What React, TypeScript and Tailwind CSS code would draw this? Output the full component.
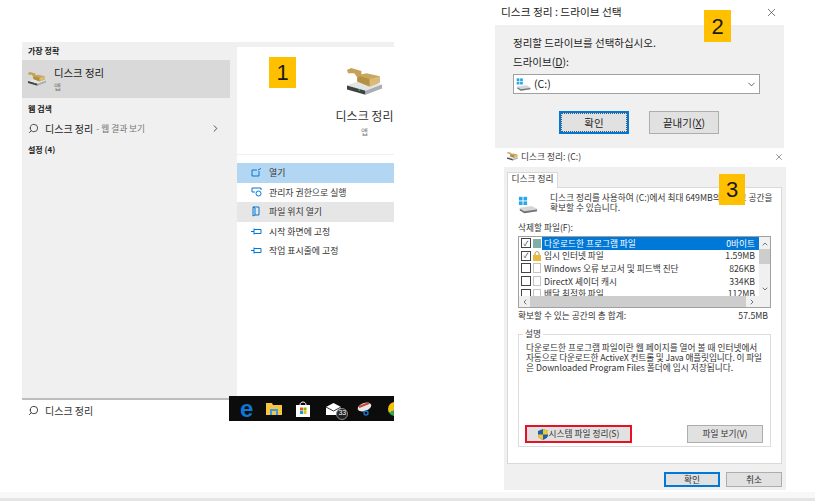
import { ChevronDown, ChevronLeft, ChevronRight, ChevronUp, Search, X } from "lucide-react";
import type { ReactNode } from "react";

const font = "font-['Noto_Sans_CJK_KR','Noto_Sans',sans-serif]";

function CleanupIcon({ size = 28 }: { size?: number }) {
  return (
    <svg width={size} viewBox="0 0 34 26" className="block">
      <path d="M0 17 L16 11 L34 16 L18 22 Z" fill="#e2e4e6" />
      <path d="M0 17 L18 22 L18 26 L0 21 Z" fill="#3e4244" />
      <path d="M18 22 L34 16 L34 20 L18 26 Z" fill="#a9adb1" />
      <circle cx="12" cy="21.5" r="0.9" fill="#35c060" />
      <path d="M10 7 L19 5 L32 8 L32 14 L22 18 L10 13 Z" fill="#c9a75d" />
      <path d="M10 7 L22 11 L22 18 L10 13 Z" fill="#b58f42" />
      <path d="M22 11 L32 8 L32 14 L22 18 Z" fill="#d8bb76" />
      <path d="M0 2 L4 0 L14 3 L14 8 L10 9 L7 5 L1 5 Z" fill="#c5a257" />
    </svg>
  );
}

function DriveIcon({ size = 22 }: { size?: number }) {
  return (
    <svg width={size} height={size} viewBox="0 0 22 20">
      <rect x="1" y="1" width="4" height="4" fill="#28a8ea" />
      <rect x="6" y="1" width="4" height="4" fill="#28a8ea" />
      <rect x="1" y="6" width="4" height="4" fill="#28a8ea" />
      <rect x="6" y="6" width="4" height="4" fill="#28a8ea" />
      <path d="M2 13 L15 11 L21 14 L21 17 L7 19 L2 16 Z" fill="#d4d6d8" />
      <path d="M2 16 L7 19 L21 17 L21 15 L7 17 L2 14 Z" fill="#70757a" />
    </svg>
  );
}

function Badge({ n, className }: { n: number; className: string }) {
  return (
    <div className={`absolute flex items-center justify-center bg-[#ffc000] text-[22px] text-[#1a1a1a] font-['Liberation_Sans',sans-serif] ${className}`}>
      {n}
    </div>
  );
}

function MenuRow({ label, bg, icon }: { label: string; bg?: string; icon: ReactNode }) {
  return (
    <div className={`flex h-[19.5px] items-center text-[8.9px] text-[#333] ${bg ?? ""}`}>
      <span className="ml-[14px] mr-[7px] flex w-[11px] justify-center">{icon}</span>
      {label}
    </div>
  );
}

const pin = (
  <svg width="11" height="9" viewBox="0 0 11 9" fill="none" stroke="#0078d7" strokeWidth="1">
    <path d="M0 4.5H3M3 1.5V7.5M3 2.5H10V6.5H3" />
  </svg>
);

function SearchWindow() {
  return (
    <div className={`absolute left-[22px] top-[42px] h-[379px] w-[372px] ${font}`}>
      <div className="flex h-[356px] bg-[#f0f0f0]">
        <div className="w-[208px] text-[#222]">
          <div className="flex h-[18px] items-center pl-[6px] text-[8px] font-bold">가장 정확</div>
          <div className="flex h-[38px] items-center bg-[#d9d9d9]">
            <span className="ml-[6px] mr-[8px] flex"><CleanupIcon size={18} /></span>
            <div className="flex flex-col">
              <span className="text-[10.4px] leading-[15px]">디스크 정리</span>
              <span className="text-[7.5px] leading-[14px] text-[#777]">앱</span>
            </div>
          </div>
          <div className="flex h-[22px] items-center pl-[6px] text-[8px] font-bold">웹 검색</div>
          <div className="flex h-[17px] items-center pl-[6px]">
            <Search size={11} className="mr-[6px] -scale-x-100 text-[#444]" />
            <span className="text-[10px]">디스크 정리</span>
            <span className="ml-[3px] text-[8.7px] text-[#777]">- 웹 결과 보기</span>
            <ChevronRight size={11} className="ml-auto mr-[9px] text-[#444]" />
          </div>
          <div className="flex h-[26px] items-center pl-[6px] text-[8px] font-bold">설정 (4)</div>
        </div>
        <div className="ml-[7px] mt-[5px] flex w-[157px] flex-col bg-white">
          <div className="flex h-[107px] flex-col items-center whitespace-nowrap">
            <span className="ml-[98px] mt-[21px]"><CleanupIcon size={35} /></span>
            <span className="ml-[98px] mt-[13px] text-[12px] leading-[16px] text-[#333]">디스크 정리</span>
            <span className="ml-[98px] mt-[3px] text-[7.5px] leading-[10px] text-[#777]">앱</span>
          </div>
          <div className="mb-[8px] h-[1px] bg-[#f0f0f0]" />
          <MenuRow
            label="열기"
            bg="bg-[#b3d7f2]"
            icon={
              <svg width="11" height="9" viewBox="0 0 11 9" fill="none" stroke="#0078d7">
                <path d="M8 3V8H1V2H6M7 2L10 .5" />
              </svg>
            }
          />
          <MenuRow
            label="관리자 권한으로 실행"
            icon={
              <svg width="11" height="10" viewBox="0 0 11 10" fill="none" stroke="#0078d7">
                <path d="M1 5V1H10V3M1 5H4" />
                <circle cx="7.5" cy="6.5" r="2.5" />
              </svg>
            }
          />
          <MenuRow
            label="파일 위치 열기"
            bg="bg-[#e6e6e6]"
            icon={
              <svg width="9" height="11" viewBox="0 0 9 11" fill="none" stroke="#0078d7">
                <path d="M1 1H7V9H3M1 1V10L3 9V2L1 1" />
              </svg>
            }
          />
          <MenuRow label="시작 화면에 고정" icon={pin} />
          <MenuRow label="작업 표시줄에 고정" icon={pin} />
        </div>
      </div>
      <div className="flex h-[23px]">
        <div className="flex w-[207px] items-center border-t-2 border-[#bdbdbd] bg-white pl-[6px] text-[#333]">
          <Search size={11} className="mr-[6px] -scale-x-100" />
          <span className="text-[10px]">디스크 정리</span>
        </div>
        <div className="-mt-[2px] flex w-[165px] items-center gap-[13px] overflow-hidden bg-[#0c0c0c] pl-[11px]">
          <span className="w-[16px] text-[24px] font-bold leading-[20px] text-[#0a78d6] font-['Liberation_Sans',sans-serif]">e</span>
          <svg width="16" height="13" viewBox="0 0 16 13" className="shrink-0">
            <path d="M0 1H6L7 3H16V13H0Z" fill="#f5c543" />
            <rect x="4" y="7" width="8" height="6" fill="#3c9ae0" />
            <rect x="6" y="9" width="4" height="4" fill="#f5c543" />
          </svg>
          <svg width="16" height="16" viewBox="0 0 16 16" className="shrink-0">
            <path d="M5 4C5 0 11 0 11 4" fill="none" stroke="#fff" />
            <rect x="1" y="4" width="14" height="12" fill="#fff" />
            <rect x="5" y="6.5" width="3" height="3" fill="#f25022" />
            <rect x="8.5" y="6.5" width="3" height="3" fill="#7fba00" />
            <rect x="5" y="10" width="3" height="3" fill="#00a4ef" />
            <rect x="8.5" y="10" width="3" height="3" fill="#ffb900" />
          </svg>
          <span className="relative ml-[2px] flex shrink-0">
            <svg width="15" height="12" viewBox="0 0 15 12">
              <path d="M0 4L7.5 0L15 4V12H0Z" fill="#fff" />
              <path d="M0 4L7.5 8L15 4" fill="none" stroke="#333" />
            </svg>
            <span className="absolute -bottom-[5px] -right-[7px] flex h-[12px] w-[12px] items-center justify-center rounded-full border border-[#888] bg-[#222] text-[7px] text-white font-['Liberation_Sans',sans-serif]">33</span>
          </span>
          <svg width="15" height="14" viewBox="0 0 15 14" className="ml-[3px] shrink-0">
            <ellipse cx="7.5" cy="5" rx="7" ry="4" fill="#e8e8e8" transform="rotate(-20 7.5 5)" />
            <path d="M2 5L12 1" stroke="#c9403a" strokeWidth="2" />
            <circle cx="9" cy="11" r="2" fill="none" stroke="#1a73c9" strokeWidth="1.5" />
          </svg>
          <span className="ml-[3px] h-[14px] w-[14px] shrink-0 rounded-full bg-[conic-gradient(#e04a3a_0_33%,#2fa84f_33%_66%,#f4c20d_66%)]" />
        </div>
      </div>
    </div>
  );
}

function DriveDialog() {
  return (
    <div className={`absolute left-[495px] top-0 w-[289px] text-[10.5px] text-[#222] ${font}`}>
      <div className="flex h-[25px] items-center justify-between pl-[6px] pr-[6px] text-[10.7px]">
        디스크 정리 : 드라이브 선택
        <X size={13} strokeWidth={1.2} className="text-[#333]" />
      </div>
      <div className="flex h-[123px] flex-col bg-[#f0f0f0] pl-[18px] pr-[24px] pt-[11px]">
        <div className="leading-[14px]">정리할 드라이브를 선택하십시오.</div>
        <div className="mt-[5px] leading-[14px]">드라이브(<u>D</u>):</div>
        <div className="mt-[5px] flex h-[20px] items-center border border-[#a0a0a0] bg-white pl-[2px] pr-[2px]">
          <DriveIcon size={15} />
          <span className="ml-[3px]">(C:)</span>
          <ChevronDown size={11} className="ml-auto text-[#555]" />
        </div>
        <div className="mt-[17px] flex gap-[20px] pl-[46px]">
          <div className="flex h-[23px] w-[70px] items-center justify-center border-2 border-[#0078d7] bg-[#e1e1e1] outline-1 -outline-offset-3 outline-dotted outline-[#555]">확인</div>
          <div className="flex h-[23px] w-[70px] items-center justify-center border border-[#adadad] bg-[#e1e1e1]">끝내기(<u>X</u>)</div>
        </div>
      </div>
    </div>
  );
}

const files = [
  { name: "다운로드한 프로그램 파일", size: "0바이트", on: true, icon: "box", sel: true },
  { name: "임시 인터넷 파일", size: "1.59MB", on: true, icon: "lock" },
  { name: "Windows 오류 보고서 및 피드백 진단", size: "826KB", on: false, icon: "doc" },
  { name: "DirectX 셰이더 캐시", size: "334KB", on: false, icon: "doc" },
  { name: "배달 최적화 파일", size: "112MB", on: false, icon: "doc" },
];

function FileIcon({ kind }: { kind: string }) {
  if (kind === "box") return <span className="h-[9px] w-[8px] bg-[#7fb0a8]" />;
  if (kind === "lock")
    return (
      <svg width="8" height="10" viewBox="0 0 8 10">
        <path d="M2 4V2.5C2 0 6 0 6 2.5V4" fill="none" stroke="#b08a30" />
        <rect y="4" width="8" height="6" fill="#e8b93c" />
      </svg>
    );
  return <span className="h-[10px] w-[8px] border border-[#c4c4c4] bg-white" />;
}

function Cleanup() {
  return (
    <div className={`absolute left-[504px] top-[149px] w-[282px] text-[8.7px] text-[#333] ${font}`}>
      <div className="flex h-[18px] items-center justify-between pb-[3px] pl-[3px] pr-[2px]">
        <span className="flex items-center gap-[3px]">
          <CleanupIcon size={11} />
          <span>디스크 정리: (C:)</span>
        </span>
        <X size={10} strokeWidth={1.2} />
      </div>
      <div className="flex h-[323px] flex-col bg-[#f0f0f0] pl-[3px] pr-[4px] pt-[5px]">
        <div className="relative z-10 flex h-[16px] w-[51px] items-center justify-center border border-b-0 border-[#d9d9d9] bg-white pb-[3px]">디스크 정리</div>
        <div className="-mt-[1px] flex h-[277px] flex-col border border-[#d9d9d9] bg-white px-[10px]">
          <div className="flex pt-[4px]">
            <span className="mt-[3px] mr-[12px] flex"><DriveIcon size={20} /></span>
            <div className="whitespace-nowrap pt-[1px] leading-[10px]">
              디스크 정리를 사용하여 (C:)에서 최대 649MB의 디스크 공간을
              <br />
              확보할 수 있습니다.
            </div>
          </div>
          <div className="mt-[7px] leading-[12px]">삭제할 파일(F):</div>
          <div className="mt-[2px] flex h-[72px] flex-col border border-[#a0a0a0]">
            <div className="flex h-[59px] overflow-hidden">
              <div className="min-w-0 flex-1">
                {files.map((f) => (
                  <div key={f.name} className="flex h-[12.6px] shrink-0 items-center pl-[2px]">
                    <span className="flex h-[10px] w-[10px] shrink-0 items-center justify-center border border-[#444] bg-white text-[7px] leading-none">{f.on ? "✓" : ""}</span>
                    <span className="ml-[2px] flex w-[8px] justify-center"><FileIcon kind={f.icon} /></span>
                    <div className={`ml-[1px] flex h-full flex-1 items-center justify-between pl-[2px] pr-[4px] ${f.sel ? "bg-[#0078d7] text-white" : ""}`}>
                      <span className="whitespace-nowrap">{f.name}</span>
                      <span>{f.size}</span>
                    </div>
                  </div>
                ))}
              </div>
              <div className="flex w-[11px] shrink-0 flex-col items-center bg-[#f0f0f0] pb-[3px] pt-[3px]">
                <ChevronUp size={8} />
                <span className="mt-[1px] h-[15px] w-full bg-[#cdcdcd]" />
                <ChevronDown size={8} className="mt-auto" />
              </div>
            </div>
            <div className="flex h-[11px] items-center bg-[#f0f0f0]">
              <span className="flex w-[11px] justify-center"><ChevronLeft size={8} /></span>
              <span className="h-full flex-1 bg-[#cdcdcd]" />
              <span className="flex w-[24px] pl-[2px]"><ChevronRight size={8} /></span>
            </div>
          </div>
          <div className="mt-[2px] flex justify-between pr-[3px] leading-[12px]">
            <span>확보할 수 있는 공간의 총 합계:</span>
            <span>57.5MB</span>
          </div>
          <div className="relative mt-[12px] flex h-[113px] flex-col border border-[#dcdcdc] px-[7px] pt-[8px]">
            <span className="absolute -top-[6px] left-[4px] bg-white px-[2px] leading-[10px]">설명</span>
            <div className="whitespace-nowrap leading-[10px]">
              다운로드한 프로그램 파일이란 웹 페이지를 열어 볼 때 인터넷에서
              <br />
              <span className="tracking-[-0.15px]">자동으로 다운로드한 ActiveX 컨트롤 및 Java 애플릿입니다. 이 파일</span>
              <br />
              은 Downloaded Program Files 폴더에 임시 저장됩니다.
            </div>
            <div className="mb-[3px] mt-auto -ml-[1px] flex items-center justify-between">
              <div className="flex h-[18px] w-[107px] items-center justify-center gap-[1px] border-2 border-[#e81123] bg-[#e1e1e1]">
                <svg width="10" height="11" viewBox="0 0 10 11">
                  <path d="M5 0L10 2V6C10 9 7 10 5 11C3 10 0 9 0 6V2Z" fill="#1d5fb0" />
                  <path d="M5 0L10 2V5.5H5ZM5 5.5H0V6C0 9 3 10 5 11Z" fill="#f5c72e" />
                </svg>
                시스템 파일 정리(S)
              </div>
              <div className="flex h-[18px] w-[76px] items-center justify-center border border-[#adadad] bg-[#e1e1e1]">파일 보기(V)</div>
            </div>
          </div>
        </div>
        <div className="mt-[8px] flex justify-end gap-[6px]">
          <div className="flex h-[15px] w-[56px] items-center justify-center border-2 border-[#0078d7] bg-[#e1e1e1]">확인</div>
          <div className="flex h-[15px] w-[56px] items-center justify-center border border-[#adadad] bg-[#e1e1e1]">취소</div>
        </div>
      </div>
    </div>
  );
}

export default function App() {
  return (
    <div className="relative h-[501px] w-[815px] overflow-hidden bg-white">
      <SearchWindow />
      <DriveDialog />
      <Cleanup />
      <Badge n={1} className="left-[269px] top-[57px] h-[31px] w-[27px]" />
      <Badge n={2} className="left-[704px] top-[10px] h-[32px] w-[27px]" />
      <Badge n={3} className="left-[719px] top-[174px] h-[31px] w-[26px]" />
      <div className="absolute bottom-0 left-0 h-[9px] w-full bg-[#f8f8f8]" />
      <div className="absolute bottom-0 left-0 h-[3px] w-full bg-[#e4e4e4]" />
    </div>
  );
}
